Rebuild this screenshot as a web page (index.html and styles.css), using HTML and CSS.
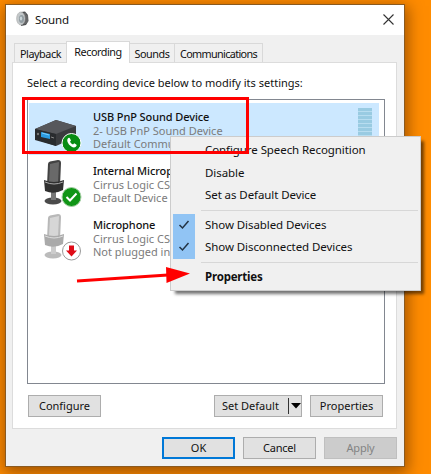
FILE: index.html
```
<!DOCTYPE html>
<html lang="en">
<head>
<meta charset="utf-8">
<title>Sound</title>
<link rel="stylesheet" href="styles.css">
</head>
<body>
<main class="window">
  <header class="titlebar">
    <svg class="speaker" width="13" height="16" viewBox="0 0 13 16"><path d="M5 1 9 .5 12 4 12.500 10 10 14 5 15z" fill="#505254"/><path d="M9 2v11M11 4v8" stroke="#999" stroke-width=".6"/><ellipse cx="4.800" cy="7.500" rx="4.200" ry="6.500" fill="#c3c8ca" stroke="#aaa" stroke-width=".6"/><ellipse cx="5.500" cy="8" rx="2.500" ry="4" fill="#929da2"/><ellipse cx="5" cy="7.500" rx="1.200" ry="2" fill="#c9d4d8"/></svg>
    <h1>Sound</h1>
    <svg class="close" width="11" height="11" viewBox="0 0 11 11"><path d="M.5.5l10 10M10.5.5l-10 10" stroke="#333" stroke-width="1.1"/></svg>
  </header>
  <nav class="tabs">
    <span class="tab playback">Playback</span><span class="tab active">Recording</span><span class="tab sounds">Sounds</span><span class="tab comm">Communications</span>
  </nav>
  <section class="panel">
    <p class="intro">Select a recording device below to modify its settings:</p>
    <div class="list">
      <div class="device selected">
        <svg class="icon" width="50" height="52" viewBox="0 0 50 52"><path d="M7 26 28 17 48 23 48 34 28 43 7 36z" fill="#3a3b3e"/><path d="M7 26 28 17 48 23 28 31z" fill="#56575b"/><path d="M7 26 28 31V43L7 37z" fill="#292b2e"/><path d="M13 29 22 31V36L13 34z" fill="#2b9be0"/><path d="M14 30 21 32" stroke="#7bd0ff"/><circle cx="10" cy="31" r="1.200" fill="#777"/><path d="M23 34 26 35" stroke="#888"/><circle cx="43.500" cy="40" r="9.500" fill="#078c13" stroke="#fff" stroke-width="1"/><path d="M39.500 36c1-1.500 2-1.500 2.500-.5l1 2-1 1.300c.7 1.300 1.700 2.200 3 2.700l1.200-1.200 2 1.200c.8.6.5 1.600-.7 2.600-3.500 2-9.500-4.500-8-8.100z" fill="#fff"/></svg>
        <div class="info"><b>USB PnP Sound Device</b><span>2- USB PnP Sound Device</span><span>Default Commu</span></div>
        <div class="meter"></div>
      </div>
      <div class="device">
        <svg class="icon" width="50" height="52" viewBox="0 0 50 52"><ellipse cx="25" cy="44" rx="8.500" ry="3.500" fill="#4b4b4b"/><path d="M23 34h5v9h-5z" fill="#777"/><path d="M20 7q0-2 2-2.500l8-1.500q3 0 3 3l-1 23-13-1z" fill="#424242"/><path d="M22 7 31 5 30 26 21 25z" fill="#696969"/><path d="M16 23q10 4 20 0l-1 10q-9 5-18 1z" fill="#303030"/><path d="M17 25q9 4 18 0" stroke="#aaa" fill="none"/><circle cx="43.500" cy="40" r="9.500" fill="#109516" stroke="#a7cfa7"/><path d="m38.500 40 3.500 3.500 6.500-7" fill="none" stroke="#fff" stroke-width="2"/></svg>
        <div class="info"><b>Internal Microp</b><span>Cirrus Logic CS4</span><span>Default Device</span></div>
      </div>
      <div class="device">
        <svg class="icon" width="50" height="52" viewBox="0 0 50 52"><ellipse cx="25" cy="44" rx="8.500" ry="3.500" fill="#bbb"/><path d="M23 34h5v9h-5z" fill="#ccc"/><path d="M20 7q0-2 2-2.500l8-1.500q3 0 3 3l-1 23-13-1z" fill="#b8b8b8"/><path d="M22 7 31 5 30 26 21 25z" fill="#d6d6d6"/><path d="M16 23q10 4 20 0l-1 10q-9 5-18 1z" fill="#aaa"/><path d="M17 25q9 4 18 0" stroke="#ddd" fill="none"/><circle cx="43.500" cy="40" r="9" fill="#fff" stroke="#999"/><path d="M41 34.500h5v5h3l-5.500 6-5.500-6h3z" fill="#df0b17"/></svg>
        <div class="info"><b>Microphone</b><span>Cirrus Logic CS4</span><span>Not plugged in</span></div>
      </div>
    </div>
    <div class="actions"><button>Configure</button><button class="split"><span>Set Default</span><i></i><svg width="10" height="6" viewBox="0 0 10 6"><path d="M0 0h10L5 5.500z"/></svg></button><button>Properties</button></div>
  </section>
  <footer class="footer"><button class="ok">OK</button><button class="cancel">Cancel</button><button class="apply" disabled>Apply</button></footer>
</main>
<div class="menu">
  <div class="item"><span>Configure Speech Recognition</span></div>
  <div class="item"><span>Disable</span></div>
  <div class="item"><span>Set as Default Device</span></div>
  <hr>
  <div class="item checked"><svg width="12" height="10" viewBox="0 0 12 10"><path d="m1.500 5 3 3 6-7" /></svg><span>Show Disabled Devices</span></div>
  <div class="item checked"><svg width="12" height="10" viewBox="0 0 12 10"><path d="m1.500 5 3 3 6-7" /></svg><span>Show Disconnected Devices</span></div>
  <hr>
  <div class="item strong"><span>Properties</span></div>
</div>
<svg class="annotation" width="431" height="474" viewBox="0 0 431 474"><path d="M23.500 98.500H247.500V152.500H23.500z" fill="none" stroke="red" stroke-width="3"/><path d="M77 281 168 275" stroke="red" stroke-width="3"/><path d="M166 267 190 273.500 166.500 283z" fill="red"/></svg>
</body>
</html>
```
FILE: styles.css
```
* { box-sizing: border-box; }
body { margin: 0; width: 431px; height: 474px; padding: 4px 0 0 5px; overflow: hidden; background: #ff8c00; font: 11px/14px "Noto Sans", "Open Sans", sans-serif; color: #111; }
.window { width: 400px; height: 463px; background: #f0f0f0; border: 1px solid #8a5a20; box-shadow: 1px 4px 14px 2px rgba(70,30,0,.5); }
.titlebar { height: 30px; background: #fff; display: flex; align-items: center; padding: 0 10px 2px; }
.titlebar h1 { font-size: 11.5px; letter-spacing: -.1px; font-weight: 400; margin: 2px 0 0 6px; flex: 1; }
.tabs { height: 27px; padding: 7px 0 0 8px; display: flex; align-items: flex-end; }
.tab { height: 19px; border: 1px solid #d9d9d9; border-bottom: 0; display: flex; justify-content: center; align-items: center; font-size: 10.8px; letter-spacing: -.45px; padding-top: 1px; }
.playback { width: 52px; border-right: 0; }
.active { width: 64px; height: 22px; background: #fff; margin-bottom: -1px; padding: 0 0 2px; z-index: 1; }
.sounds { width: 45px; border-left: 0; }
.comm { width: 88px; border-left: 0; letter-spacing: -.65px; }
.panel { margin-left: 6px; width: 385px; height: 367px; background: #fff; border: 1px solid #dcdcdc; padding: 13px 13px 0 14px; }
.intro { margin: 0 0 9px; white-space: nowrap; }
.list { width: 358px; height: 285px; border: 1px solid #828790; padding: 3px 5px 0 1px; }
.device { height: 54px; display: flex; border-bottom: 2px solid #fff; white-space: nowrap; }
.selected { background: #cce8ff; }
.icon { flex: none; margin-left: -1px; overflow: visible; }
.info { width: 237px; margin-left: 15px; padding-top: 7px; display: flex; flex-direction: column; line-height: 13.5px; color: #7b7b7b; }
.info b { color: #111; font-weight: 500; letter-spacing: -.1px; }
.meter { margin: 5px 0 0 28px; width: 14px; height: 45px; background: repeating-linear-gradient(#99cbe2 0 3px, #b8ddf0 3px 4px); }
button { width: 73px; height: 22px; border: 1px solid #adadad; background: #e1e1e1; padding: 0; font: inherit; color: #111; display: flex; justify-content: center; align-items: center; white-space: nowrap; }
.actions { display: flex; margin: 11px 0 0 1px; gap: 8px; }
.actions .split { width: 88px; margin-left: 105px; justify-content: flex-start; padding-left: 7px; }
.split i { width: 1px; height: 16px; background: #333; margin: 0 2px 0 9px; }
.footer { display: flex; justify-content: flex-end; gap: 8px; padding: 8px 7px 0 0; }
.ok { border: 2px solid #0078d7; }
.cancel, .apply { letter-spacing: -.2px; }
.apply { background: #ccc; border-color: #bfbfbf; color: #838383; }
.menu { position: absolute; left: 170px; top: 136px; width: 251px; height: 155px; border: 1px solid #ccc; background: #f0f0f0; box-shadow: 4px 4px 3px -1px rgba(0,0,0,.55); padding: 2px; font-size: 11.5px; letter-spacing: -.08px; }
.item { height: 22.5px; display: flex; align-items: center; padding-left: 32px; white-space: nowrap; }
.menu hr { margin: 3px 0 3px 28px; border: 0; border-top: 1px solid #d7d7d7; }
.checked { padding-left: 0; background: linear-gradient(90deg, #91c4f4 22px, transparent 22px); }
.checked svg { margin: 0 15px 0 5px; fill: none; stroke: #234; stroke-width: 1.5; }
.strong { font-weight: 700; letter-spacing: -.2px; }
.annotation { position: absolute; left: 0; top: 0; pointer-events: none; }
```
